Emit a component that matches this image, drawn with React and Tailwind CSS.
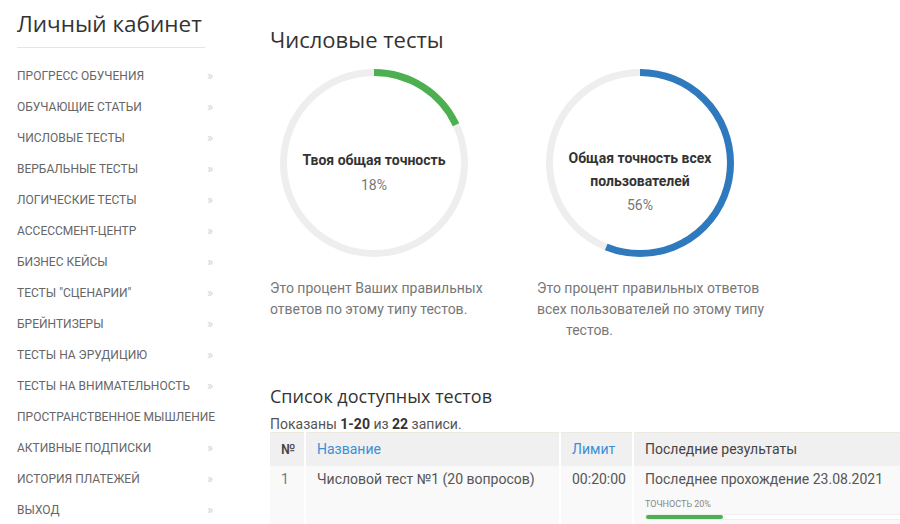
import React from "react";

const menu = [
  ["Прогресс обучения", true],
  ["Обучающие статьи", true],
  ["Числовые тесты", true],
  ["Вербальные тесты", true],
  ["Логические тесты", true],
  ["Ассессмент-центр", true],
  ["Бизнес кейсы", true],
  ['Тесты "сценарии"', true],
  ["Брейнтизеры", true],
  ["Тесты на эрудицию", true],
  ["Тесты на внимательность", true],
  ["Пространственное мышление", false],
  ["Активные подписки", true],
  ["История платежей", true],
  ["Выход", true],
];

function Ring({ pct, color, children }) {
  const r = 90.5;
  const c = 2 * Math.PI * r;
  return (
    <div className="relative w-[188px] h-[188px]">
      <svg width="188" height="188" viewBox="0 0 188 188" className="absolute inset-0">
        <circle cx="94" cy="94" r={r} fill="none" stroke="#eeeeee" strokeWidth="7" />
        <circle
          cx="94"
          cy="94"
          r={r}
          fill="none"
          stroke={color}
          strokeWidth="7"
          strokeDasharray={`${(c * pct) / 100} ${c}`}
          transform="rotate(-90 94 94)"
        />
      </svg>
      <div className="absolute inset-0 flex flex-col items-center text-center px-4">
        {children}
      </div>
    </div>
  );
}

export default function App() {
  const roboto = { fontFamily: "Roboto, 'Liberation Sans', sans-serif" };
  return (
    <div
      className="w-[900px] h-[524px] overflow-hidden bg-white flex"
      style={roboto}
    >
      {/* Sidebar */}
      <aside className="w-[270px] shrink-0 pl-[17px] pt-[9px]">
        <h1
          className="text-[22.5px] leading-[30px] text-[#333] font-normal"
          style={{ fontFamily: "'Open Sans', sans-serif" }}
        >
          Личный кабинет
        </h1>
        <div className="w-[188px] h-px bg-[#e4e6e6] mt-[8px]" />
        <ul className="mt-[12px] w-[196px]">
          {menu.map(([label, chev]) => (
            <li
              key={label}
              className="h-[31px] flex items-center justify-between text-[12px] uppercase text-[#666] whitespace-nowrap"
            >
              <span>{label}</span>
              {chev && <span className="text-[#cfcfcf] text-[13px]">»</span>}
            </li>
          ))}
        </ul>
      </aside>

      {/* Main */}
      <main className="flex-1 pt-[24px]">
        <h2
          className="text-[22px] leading-[30px] text-[#333] font-normal"
          style={{ fontFamily: "'Open Sans', sans-serif" }}
        >
          Числовые тесты
        </h2>

        <div className="flex gap-[27px] mt-[15px]">
          <div className="w-[240px]">
            <div className="ml-[10px]">
              <Ring pct={18} color="#4caf50">
                <div className="mt-[80px] text-[14px] font-bold text-[#333] leading-[22px]">
                  Твоя общая точность
                </div>
                <div className="text-[14px] text-[#777] leading-[22px] mt-[3px]">18%</div>
              </Ring>
            </div>
            <p className="mt-[21px] text-[14px] leading-[21px] text-[#777] w-[230px]">
              Это процент Ваших правильных ответов по этому типу тестов.
            </p>
          </div>
          <div className="w-[240px]">
            <div className="ml-[9px]">
              <Ring pct={56} color="#2f7abf">
                <div className="mt-[78px] text-[14px] font-bold text-[#333] leading-[23px]">
                  Общая точность всех пользователей
                </div>
                <div className="text-[14px] text-[#777] leading-[22px] mt-[1px]">56%</div>
              </Ring>
            </div>
            <p className="mt-[21px] text-[14px] leading-[21px] text-[#777] w-[235px]">
              Это процент правильных ответов всех пользователей по этому типу
              <br />
              <span className="pl-[29px]">тестов.</span>
            </p>
          </div>
        </div>

        <h3
          className="mt-[43px] text-[18px] leading-[24px] text-[#333] font-normal"
          style={{ fontFamily: "'Open Sans', sans-serif" }}
        >
          Список доступных тестов
        </h3>
        <div className="mt-[7px] text-[14px] leading-[18px] text-[#555]">
          Показаны <b className="text-[#333]">1-20</b> из <b className="text-[#333]">22</b> записи.
        </div>

        <table className="mt-[-1px] w-[800px] border-collapse border-t border-[#ece9e0] text-[14px]">
          <thead>
            <tr className="bg-[#f0f0f0] h-[33px]">
              <th className="w-[35px] text-left font-medium text-[#444] pl-[11px] border-r-2 border-white">№</th>
              <th className="w-[255px] text-left font-normal text-[#3a8fd6] pl-[11px] border-r-2 border-white">Название</th>
              <th className="w-[73px] text-left font-normal text-[#3a8fd6] pl-[11px] border-r-2 border-white">Лимит</th>
              <th className="text-left font-normal text-[#444] pl-[11px]">Последние результаты</th>
            </tr>
          </thead>
          <tbody>
            <tr className="bg-[#f9f9f9] align-top">
              <td className="pl-[11px] pt-[3px] text-[#777] border-r-2 border-white h-[60px]">1</td>
              <td className="pl-[11px] pt-[3px] text-[#555] border-r-2 border-white">Числовой тест №1 (20 вопросов)</td>
              <td className="pl-[11px] pt-[3px] text-[#555] border-r-2 border-white">00:20:00</td>
              <td className="pl-[11px] pt-[3px] text-[#555]">
                <div className="leading-[20px]">Последнее прохождение 23.08.2021</div>
                <div className="mt-[9px] text-[9px] uppercase text-[#888] leading-[12px]">Точность 20%</div>
                <div className="mt-[4px] w-[385px] h-[6px] border border-[#eeeeee] rounded-sm bg-white flex items-center">
                  <div className="h-[4px] w-[20%] bg-[#4caf50] rounded-sm" />
                </div>
              </td>
            </tr>
          </tbody>
        </table>
      </main>
    </div>
  );
}
